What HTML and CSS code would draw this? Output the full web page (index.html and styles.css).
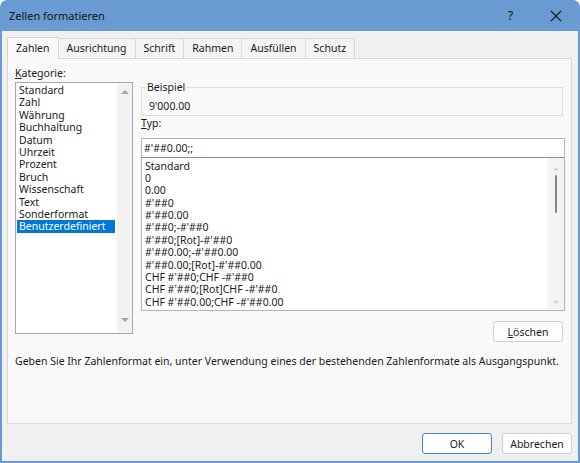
FILE: index.html
```html
<!DOCTYPE html>
<html lang="de">
<head>
<meta charset="utf-8">
<title>Zellen formatieren</title>
<link rel="stylesheet" href="styles.css">
</head>
<body>
<div class="window">
  <header class="titlebar">
    <span class="title">Zellen formatieren</span>
    <span class="help">?</span>
    <span class="close"><svg width="12" height="12" viewBox="0 0 12 12"><path d="M1 1L11 11M11 1L1 11" stroke="#1b1b1b" stroke-width="1.1" fill="none"/></svg></span>
  </header>
  <div class="body">
    <div class="tabs">
      <div class="tab active">Zahlen</div>
      <div class="tab">Ausrichtung</div>
      <div class="tab">Schrift</div>
      <div class="tab">Rahmen</div>
      <div class="tab">Ausfüllen</div>
      <div class="tab">Schutz</div>
    </div>
    <div class="panel">
      <div class="columns">
        <div class="left">
          <div class="label"><u>K</u>ategorie:</div>
          <div class="catlist">
            <ul class="items">
              <li>Standard</li>
              <li>Zahl</li>
              <li>Währung</li>
              <li>Buchhaltung</li>
              <li>Datum</li>
              <li>Uhrzeit</li>
              <li>Prozent</li>
              <li>Bruch</li>
              <li>Wissenschaft</li>
              <li>Text</li>
              <li>Sonderformat</li>
              <li class="selected">Benutzerdefiniert</li>
            </ul>
            <div class="vscroll"><span class="arrow up"></span><span class="arrow down"></span></div>
          </div>
        </div>
        <div class="right">
          <fieldset class="sample">
            <legend>Beispiel</legend>
            <div class="sample-value">9'000.00</div>
          </fieldset>
          <div class="label typ"><u>T</u>yp:</div>
          <div class="input">#'##0.00;;</div>
          <div class="typelist">
            <ul class="items">
              <li>Standard</li>
              <li>0</li>
              <li>0.00</li>
              <li>#'##0</li>
              <li>#'##0.00</li>
              <li>#'##0;-#'##0</li>
              <li>#'##0;[Rot]-#'##0</li>
              <li>#'##0.00;-#'##0.00</li>
              <li>#'##0.00;[Rot]-#'##0.00</li>
              <li>CHF #'##0;CHF -#'##0</li>
              <li>CHF #'##0;[Rot]CHF -#'##0</li>
              <li>CHF #'##0.00;CHF -#'##0.00</li>
            </ul>
            <div class="thinscroll"><span class="tri up"></span><span class="thumb"></span><span class="spacer"></span><span class="tri down"></span></div>
          </div>
          <div class="btnrow"><button class="btn"><u>L</u>öschen</button></div>
        </div>
      </div>
      <p class="desc">Geben Sie Ihr Zahlenformat ein, unter Verwendung eines der bestehenden Zahlenformate als Ausgangspunkt.</p>
    </div>
    <div class="footer">
      <button class="btn default">OK</button>
      <button class="btn">Abbrechen</button>
    </div>
  </div>
</div>
</body>
</html>
```
FILE: styles.css
```css
* { box-sizing: border-box; }
html, body { margin: 0; padding: 0; }
body {
  width: 580px;
  height: 463px;
  overflow: hidden;
  background: #ffffff;
  font-family: "Noto Sans", "Open Sans", sans-serif;
  font-size: 10.5px;
  color: #1a1a1a;
}
.window {
  width: 580px;
  height: 463px;
  background: #6a9ad2;
  border-radius: 7px 7px 0 0;
  display: flex;
  flex-direction: column;
}
.titlebar {
  flex: none;
  height: 31px;
  display: flex;
  align-items: center;
  padding-left: 9px;
  padding-right: 2px;
  font-size: 11px;
  color: #151515;
}
.title { flex: 1; }
.help {
  width: 45px;
  text-align: center;
  font-size: 12.5px;
}
.close {
  width: 45px;
  display: flex;
  justify-content: center;
  align-items: center;
}
.body {
  flex: 1;
  margin: 0 2px 2px;
  background: #f0f0f0;
  display: flex;
  flex-direction: column;
  padding: 6px 6px 0 5px;
}
.tabs {
  flex: none;
  height: 22px;
  display: flex;
  align-items: flex-end;
  margin-bottom: -1px;
  position: relative;
  z-index: 1;
}
.tab {
  height: 20px;
  margin-bottom: 1px;
  padding: 0 8px;
  line-height: 18px;
  border: 1px solid #dadada;
  border-bottom: none;
  margin-left: -1px;
  background: #f4f4f4;
}
.tab.active {
  height: 22px;
  margin-bottom: 0;
  margin-left: 0;
  padding: 0 8px;
  line-height: 20px;
  background: #f9f9f9;
  border-color: #d4d4d4;
}
.panel {
  flex: none;
  height: 366px;
  background: #f9f9f9;
  border: 1px solid #d9d9d9;
  padding: 7px 5px 0 7px;
}
.columns {
  display: flex;
  gap: 8px;
}
.left { width: 118px; flex: none; }
.label {
  line-height: 14px;
  height: 16px;
}
.catlist {
  height: 252px;
  border: 1px solid #a9a9a9;
  background: #ffffff;
  display: flex;
}
.items {
  list-style: none;
  margin: 0;
  padding: 0;
  flex: 1;
}
.catlist .items {
  padding: 1px 2px 0 1px;
}
.items li {
  line-height: 12.4px;
  height: 12.4px;
  padding: 0 2px;
  white-space: nowrap;
}
.catlist .items li.selected {
  background: #0078d7;
  color: #ffffff;
}
.vscroll {
  width: 15px;
  background: #f2f2f2;
  display: flex;
  flex-direction: column;
  justify-content: space-between;
  align-items: center;
  padding: 7px 0 11px;
}
.arrow {
  width: 0;
  height: 0;
  border-left: 4px solid transparent;
  border-right: 4px solid transparent;
}
.arrow.up { border-bottom: 4px solid #a6a6a6; }
.arrow.down { border-top: 4px solid #a6a6a6; }
.right {
  width: 424px;
  flex: none;
  display: flex;
  flex-direction: column;
}
.sample {
  margin: 15px 2px 0 0;
  padding: 5px 5px 2px 7px;
  border: 1px solid #dcdcdc;
  min-width: 0;
}
.sample legend {
  padding: 0 1px;
  margin-left: -3px;
  line-height: 13px;
}
.sample-value { line-height: 14px; }
.label.typ {
  line-height: 13px;
  height: 22px;
  padding-top: 1px;
}
.input {
  height: 19px;
  background: #ffffff;
  border: 1px solid #b4b4b4;
  border-bottom: none;
  padding: 0 2px;
  line-height: 18px;
}
.typelist {
  height: 154px;
  border: 1px solid #8f8f8f;
  border-right-color: #b4b4b4;
  border-bottom-color: #b4b4b4;
  border-left-color: #b4b4b4;
  background: #ffffff;
  display: flex;
}
.typelist .items { padding: 1.5px 0 0 1px; }
.thinscroll {
  width: 17px;
  background: #f4f4f4;
  display: flex;
  flex-direction: column;
  align-items: center;
  padding: 9px 0 6px;
}
.tri {
  width: 0;
  height: 0;
  border-left: 3px solid transparent;
  border-right: 3px solid transparent;
}
.tri.up { border-bottom: 3px solid #d2d2d2; }
.tri.down { border-top: 3px solid #d2d2d2; }
.thumb {
  width: 2px;
  height: 38px;
  margin-top: 5px;
  background: #868686;
  border-radius: 1px;
}
.spacer { flex: 1; }
.btnrow {
  display: flex;
  justify-content: flex-end;
  margin-top: 10px;
  padding-right: 2px;
}
.btn {
  width: 70px;
  height: 21px;
  padding: 0;
  font-family: inherit;
  font-size: 10.5px;
  color: #1a1a1a;
  background: #fdfdfd;
  border: 1px solid #d0d0d0;
  border-radius: 3px;
}
.btn.default {
  border-color: #3d86d6;
  background: #ffffff;
}
.desc {
  margin: 12px 0 0;
  line-height: 14px;
  white-space: nowrap;
}
.footer {
  flex: 1;
  display: flex;
  justify-content: flex-end;
  gap: 10px;
  padding-top: 9px;
}
```
